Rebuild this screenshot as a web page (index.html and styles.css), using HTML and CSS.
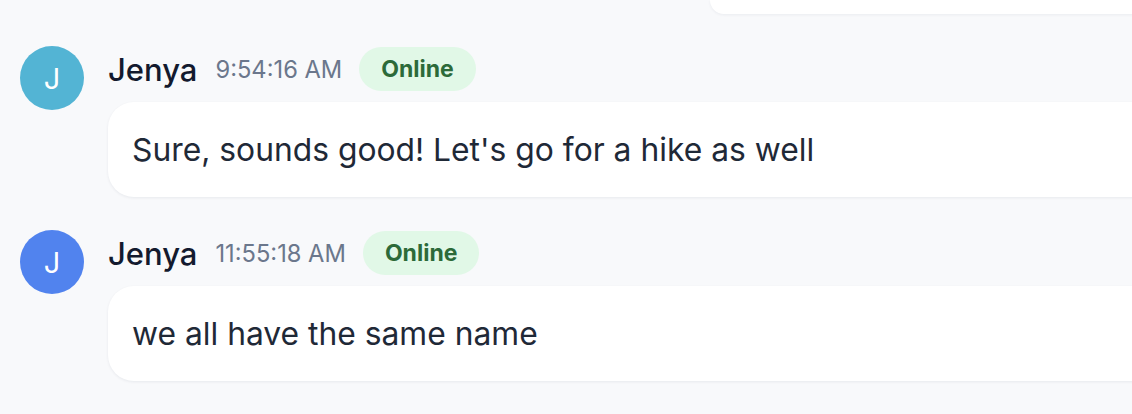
FILE: index.html
```html
<!DOCTYPE html>
<html>
<head>
<meta charset="utf-8">
<link rel="stylesheet" href="styles.css">
</head>
<body>
<div class="chat">
  <div class="prev-bubble"></div>
  <div class="message">
    <div class="avatar avatar-teal">J</div>
    <div class="content">
      <div class="header">
        <span class="name">Jenya</span>
        <span class="time">9:54:16 AM</span>
        <span class="badge">Online</span>
      </div>
      <div class="bubble">Sure, sounds good! Let's go for a hike as well</div>
    </div>
  </div>
  <div class="message">
    <div class="avatar avatar-blue">J</div>
    <div class="content">
      <div class="header">
        <span class="name">Jenya</span>
        <span class="time">11:55:18 AM</span>
        <span class="badge">Online</span>
      </div>
      <div class="bubble">we all have the same name</div>
    </div>
  </div>
</div>
</body>
</html>
```
FILE: styles.css
```css
html, body {
  margin: 0;
  padding: 0;
  background: #f8f9fb;
  overflow: hidden;
  font-family: Inter, "Noto Sans", sans-serif;
}
.chat {
  width: 1132px;
  height: 414px;
  overflow: hidden;
  display: flex;
  flex-direction: column;
}
.prev-bubble {
  height: 14px;
  margin-left: 710px;
  margin-right: -60px;
  background: #fff;
  border-radius: 0 0 0 28px;
  box-shadow: 0 1px 3px rgba(20, 30, 60, 0.06);
  flex-shrink: 0;
}
.message {
  display: flex;
  gap: 24px;
  padding-left: 20px;
  margin-right: -80px;
  margin-top: 32px;
}
.message + .message {
  margin-top: 33px;
}
.avatar {
  width: 64px;
  height: 64px;
  border-radius: 50%;
  flex-shrink: 0;
  color: #fff;
  font-size: 29px;
  font-weight: 400;
  display: flex;
  align-items: center;
  justify-content: center;
}
.avatar-teal { background: #53b4d4; }
.avatar-blue { background: #5183ee; }
.content {
  flex: 1;
  display: flex;
  flex-direction: column;
  gap: 10px;
}
.header {
  display: flex;
  align-items: center;
  height: 46px;
}
.name {
  font-size: 31px;
  font-weight: 500;
  color: #131a2e;
  margin-right: 18px;
}
.time {
  font-size: 23.7px;
  color: #6b778c;
  margin-right: 17px;
}
.badge {
  height: 44px;
  padding: 0 22px;
  border-radius: 22px;
  background: #e1f8e7;
  color: #2c6a39;
  font-size: 23px;
  font-weight: 700;
  display: flex;
  align-items: center;
}
.bubble {
  background: #fff;
  border-radius: 26px;
  padding: 0 24px;
  height: 95px;
  display: flex;
  align-items: center;
  font-size: 31.8px;
  color: #1f2937;
  box-shadow: 0 1px 3px rgba(20, 30, 60, 0.07);
}
```
